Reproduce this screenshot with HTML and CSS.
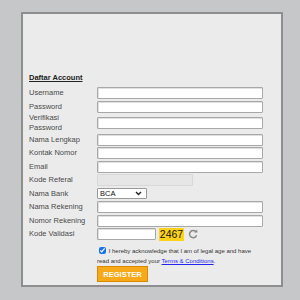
FILE: index.html
```html
<!DOCTYPE html>
<html>
<head>
<meta charset="utf-8">
<link rel="stylesheet" href="styles.css">
</head>
<body>
<div class="panel">
  <h2 class="title">Daftar Account</h2>
  <form class="form">
    <div class="row"><label>Username</label><input class="field" type="text"></div>
    <div class="row"><label>Password</label><input class="field" type="password"></div>
    <div class="row tall"><label>Verifikasi<br>Password</label><input class="field" type="password"></div>
    <div class="row"><label>Nama Lengkap</label><input class="field" type="text"></div>
    <div class="row"><label>Kontak Nomor</label><input class="field" type="text"></div>
    <div class="row"><label>Email</label><input class="field" type="text"></div>
    <div class="row"><label>Kode Referal</label><input class="field disabled" type="text" disabled></div>
    <div class="row"><label>Nama Bank</label>
      <div class="select-wrap">
        <select class="select"><option>BCA</option></select>
        <svg class="chev" width="7" height="5" viewBox="0 0 7 5"><path d="M1 1 L3.5 3.5 L6 1" fill="none" stroke="#222" stroke-width="1.4"/></svg>
      </div>
    </div>
    <div class="row"><label>Nama Rekening</label><input class="field" type="text"></div>
    <div class="row"><label>Nomor Rekening</label><input class="field" type="text"></div>
    <div class="row"><label>Kode Validasi</label>
      <div class="captcha-line">
        <input class="field short" type="text">
        <span class="captcha">2467</span>
        <svg class="refresh" width="10" height="10" viewBox="0 0 10 10"><path d="M8.2 3.2 A3.6 3.6 0 1 0 8.6 6.2" fill="none" stroke="#8a8a8a" stroke-width="1.5"/><path d="M6.2 3.4 L9.4 3.6 L9.2 0.4 Z" fill="#8a8a8a"/></svg>
      </div>
    </div>
    <p class="agree"><input class="check" type="checkbox" checked> I hereby acknowledge that I am of legal age and have read and accepted your <a href="#">Terms &amp; Conditions</a>.</p>
    <button class="register" type="button">REGISTER</button>
  </form>
</div>
</body>
</html>
```
FILE: styles.css
```css
html, body {
  margin: 0;
  padding: 0;
  background: #c5c7c9;
  font-family: "Liberation Sans", Arial, sans-serif;
}
.panel {
  box-sizing: border-box;
  margin: 12px 0 0 21px;
  width: 262px;
  height: 275px;
  background: #ebebeb;
  border: 2px solid #8e8e8e;
  padding: 59px 0 0 6px;
}
.title {
  margin: 0 0 4px 0;
  font-size: 7.5px;
  line-height: 10px;
  font-weight: bold;
  color: #222;
  text-decoration: underline;
}
.form {
  display: flex;
  flex-direction: column;
  padding: 0;
  margin: 0;
}
.row {
  display: flex;
  align-items: center;
  height: 12px;
  margin-bottom: 1.5px;
}
.row.tall {
  height: 18px;
}
.row label {
  width: 68px;
  flex: none;
  font-size: 7.5px;
  line-height: 10px;
  color: #4a4a4a;
}
.field {
  box-sizing: border-box;
  width: 166px;
  height: 12px;
  margin: 0;
  padding: 0 2px;
  border: 1px solid #a8a8a8;
  border-radius: 1px;
  background: #fff;
  box-shadow: inset 1px 1px 0 #e0e0e0;
  font-size: 7px;
}
.field.disabled {
  width: 96px;
  background: #e6e6e6;
  border-color: #d8d8d8;
  box-shadow: none;
}
.field.short {
  width: 59px;
}
.select-wrap {
  position: relative;
  width: 50px;
  height: 11px;
}
.select {
  display: block;
  appearance: none;
  -webkit-appearance: none;
  box-sizing: border-box;
  width: 50px;
  height: 11px;
  margin: 0;
  padding: 0 2px;
  border: 1px solid #9a9a9a;
  border-radius: 1px;
  background: #fff;
  font-family: "Liberation Sans", Arial, sans-serif;
  font-size: 7.5px;
  line-height: 9px;
  color: #111;
}
.chev {
  position: absolute;
  right: 5px;
  top: 3px;
}
.captcha-line {
  display: flex;
  align-items: center;
}
.captcha {
  margin-left: 3px;
  width: 25px;
  height: 13px;
  background: #ffd21a;
  font-size: 10.5px;
  line-height: 13px;
  text-align: center;
  color: #111;
}
.refresh {
  margin-left: 4px;
}
.agree {
  margin: 4.5px 0 0 68px;
  width: 162px;
  font-size: 6px;
  line-height: 10px;
  color: #333;
}
.check {
  width: 7px;
  height: 7px;
  margin: 0 1px 0 2px;
  vertical-align: -1px;
  accent-color: #1a73e8;
}
.agree a {
  color: #2222ee;
  text-decoration: underline;
}
.register {
  margin: 0 0 0 68px;
  width: 51px;
  height: 16px;
  padding: 0;
  border: 1px solid #d88a00;
  background: #f8a919;
  color: #fff;
  font-family: "Liberation Sans", Arial, sans-serif;
  font-size: 7.5px;
  font-weight: bold;
}
```
